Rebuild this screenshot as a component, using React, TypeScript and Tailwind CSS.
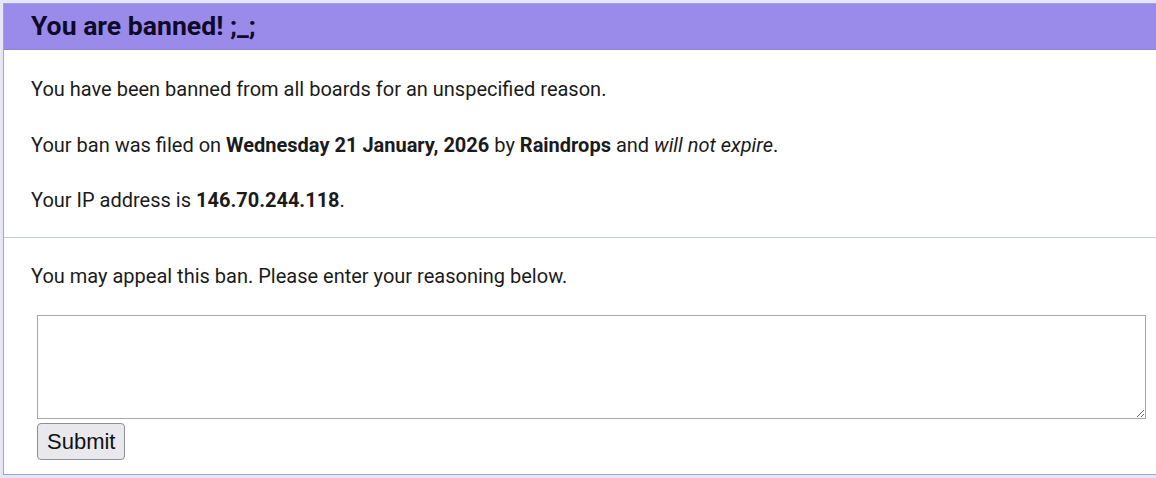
import React from "react";

export default function App() {
  return (
    <div className="w-[1156px] h-[478px] overflow-hidden bg-[#e6e6f4] pt-[3px] pl-[3px]" style={{ fontFamily: "Roboto, 'Noto Sans', sans-serif" }}>
      <div className="w-[1170px] h-[472px] bg-white border border-[#a79ce6] border-r-0 flex flex-col">
        <div className="h-[46px] bg-[#9a8aea] border-b border-[#8f83d6] flex items-center pl-[27px]">
          <h1 className="text-[26.6px] font-bold text-[#0e0b2a] leading-none">You are banned! ;_;</h1>
        </div>
        <div className="pl-[27px] pt-[28px] pb-[25px] flex flex-col gap-[32.5px] text-[20px] leading-[23px] text-[#1b1b1b]">
          <p>You have been banned from all boards for an unspecified reason.</p>
          <p>
            Your ban was filed on <b>Wednesday 21 January, 2026</b> by <b>Raindrops</b> and <i>will not expire</i>.
          </p>
          <p>
            Your IP address is <b>146.70.244.118</b>.
          </p>
        </div>
        <div className="h-px bg-[#c4ccd4] w-[1153px]" />
        <div className="pl-[27px] pt-[27px] text-[20px] leading-[23px] text-[#1b1b1b]">
          <p>You may appeal this ban. Please enter your reasoning below.</p>
        </div>
        <div className="pl-[33px] pt-[27px] flex flex-col items-start gap-[4px]">
          <textarea className="w-[1109px] h-[104px] border border-[#a7a7a7] bg-white resize-y outline-none" />
          <button
            className="h-[37px] px-[9px] rounded-[4px] border border-[#8f8f9d] bg-[#e9e9ed] text-[22px] text-[#111] leading-none"
            style={{ fontFamily: "'Liberation Sans', Arial, sans-serif" }}
          >
            Submit
          </button>
        </div>
      </div>
    </div>
  );
}
